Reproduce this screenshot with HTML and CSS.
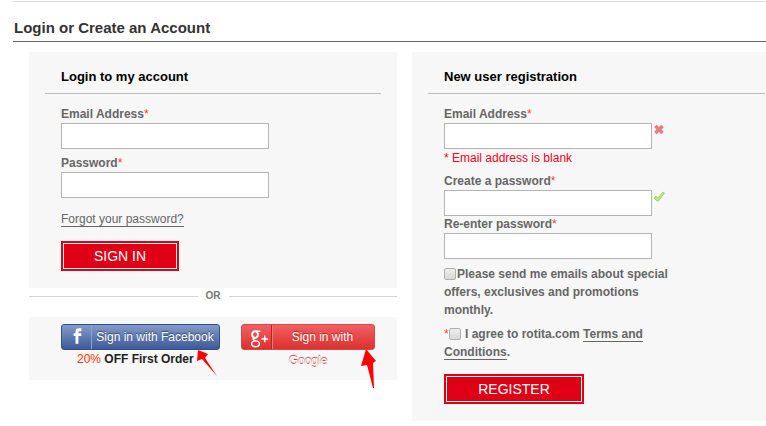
FILE: index.html
```html
<!DOCTYPE html>
<html lang="en">
<head>
  <meta charset="UTF-8" />
  <meta name="viewport" content="width=device-width, initial-scale=1.0" />
  <title>Login or Create an Account</title>
  <link rel="stylesheet" href="styles.css">
</head>
<body>
  <main class="page">
    <h1>Login or Create an Account</h1>

    <div class="columns">
      <div class="login-column">
        <form class="panel">
          <h2>Login to my account</h2>
          <div class="panel-body">
            <div class="field">
              <label for="loginEmail">Email Address<span class="required">*</span></label>
              <input type="email" id="loginEmail">
            </div>
            <div class="field">
              <label for="loginPassword">Password<span class="required">*</span></label>
              <input type="password" id="loginPassword">
            </div>
            <p class="forgot"><a href="#">Forgot your password?</a></p>
            <button type="submit" class="btn">SIGN IN</button>
          </div>
        </form>

        <div class="or">OR</div>

        <div class="social">
          <div class="social-item">
            <a href="#" class="social-btn facebook">
              <svg class="social-icon" viewBox="0 0 30 24">
                <path d="M14 19v-8h-2V8h2V7c0-3 1-4 4-4h2v3h-1c-1 0-2 0-2 1v1h3v3h-3v8z" fill="#fff" />
              </svg>
              <span class="social-text">Sign in with Facebook</span>
            </a>
            <svg class="arrow arrow-facebook" viewBox="0 0 20 40">
              <path d="M1 0l10 4-3 4 12 18L5 9 0 11z" fill="#f00" />
            </svg>
            <p class="offer"><span>20%</span> OFF First Order</p>
          </div>
          <div class="social-item">
            <a href="#" class="social-btn google">
              <svg class="social-icon" viewBox="0 0 30 24">
                <g fill="none" stroke="#fff">
                  <ellipse cx="13.500" cy="9.500" rx="3" ry="3.500" stroke-width="2" />
                  <path d="M14 6h5M13 13c-3 1-1 2 1 3" stroke-width="1.500" />
                  <ellipse cx="14" cy="19" rx="4" ry="3" stroke-width="1.500" />
                  <path d="M20 14h7M23.500 10.500v7" stroke-width="1.500" />
                </g>
              </svg>
              <span class="social-text">Sign in with Google</span>
            </a>
            <svg class="arrow arrow-google" viewBox="0 0 20 40">
              <path d="M5 0l10 12-3 2 1 25h-1L6 16l-6 1z" fill="#f00" />
            </svg>
          </div>
        </div>
      </div>

      <form class="panel">
        <h2>New user registration</h2>
        <div class="panel-body">
          <div class="field">
            <label for="newEmail">Email Address<span class="required">*</span></label>
            <div class="input-row">
              <input type="email" id="newEmail" aria-describedby="emailError">
              <svg class="status" viewBox="0 0 12 12">
                <path d="M2.500 3l7 7M9.500 3l-7 7" stroke="#c98080" stroke-width="3.500" />
                <path d="M2.500 3l7 7M9.500 3l-7 7" stroke="#ee7c7c" stroke-width="2" />
              </svg>
            </div>
            <p class="error" id="emailError">* Email address is blank</p>
          </div>
          <div class="field">
            <label for="newPassword">Create a password<span class="required">*</span></label>
            <div class="input-row">
              <input type="password" id="newPassword">
              <svg class="status" viewBox="0 0 12 12">
                <path d="M1 8l2-2 2 2 5-6 1.500 1-6 8H4z" fill="#b4ed6c" stroke="#a9cf84" stroke-width="1" />
              </svg>
            </div>
          </div>
          <div class="field field-tight">
            <label for="repeatPassword">Re-enter password<span class="required">*</span></label>
            <input type="password" id="repeatPassword">
          </div>
          <p class="check">
            <input type="checkbox" id="news"><label for="news">Please send me emails about special offers, exclusives and promotions monthly.</label>
          </p>
          <p class="check">
            <span class="required">*</span><input type="checkbox" id="agree">
            <label for="agree">I agree to rotita.com</label> <a href="#">Terms and Conditions</a>.
          </p>
          <button type="submit" class="btn btn-register">REGISTER</button>
        </div>
      </form>
    </div>
  </main>
</body>
</html>
```
FILE: styles.css
```css
* {
  box-sizing: border-box;
  margin: 0;
  padding: 0;
}

body {
  background: #fff;
  color: #666;
  font-family: "Liberation Sans", Arial, sans-serif;
  font-size: 12px;
  line-height: 18px;
  padding-top: 1px;
}

a {
  color: #666;
  text-decoration: none;
  border-bottom: 1px solid #666;
}

.page {
  margin-left: 13px;
  border-top: 1px solid #ddd;
}

h1 {
  color: #333;
  font-size: 15px;
  line-height: 20px;
  padding: 16px 0 3px 1px;
  border-bottom: 1px solid #666;
}

.columns {
  display: grid;
  grid-template-columns: 368fr 354fr;
  gap: 15px;
  align-items: start;
  padding: 10px 0 5px 16px;
}

.panel {
  background: #f7f7f7;
  padding: 0 1px 17px 16px;
}

.login-column .panel {
  padding-right: 16px;
}

h2 {
  color: #000;
  font-size: 13px;
  line-height: 18px;
  padding: 16px 16px 7px;
  border-bottom: 1px solid #bbb;
}

.panel-body {
  padding: 11px 0 0 16px;
}

.field {
  margin-bottom: 5px;
}

.field label {
  display: block;
  font-weight: bold;
}

.field input {
  display: block;
  width: 208px;
  height: 26px;
  padding: 0 4px;
  background: #fff;
  border: 1px solid #b4b4b4;
}

.field-tight {
  margin: -6px 0 6px;
}

.required {
  color: #e43;
  font-weight: normal;
}

.input-row {
  display: flex;
  gap: 1px;
}

.status {
  width: 12px;
  height: 12px;
  fill: none;
}

.error {
  color: #f00020;
}

.forgot {
  padding: 7px 0 13px;
}

.btn {
  display: block;
  width: 118px;
  height: 30px;
  color: #fff;
  background: #e00016;
  border: 2px solid #e00016;
  box-shadow: inset 0 0 0 1px #fff;
  font-family: inherit;
  font-size: 14px;
  cursor: pointer;
}

.btn-register {
  width: 140px;
  margin-top: 13px;
}

.or {
  display: flex;
  align-items: center;
  gap: 8px;
  height: 16px;
  margin-bottom: 13px;
  color: #777;
  font-size: 10px;
  font-weight: bold;
}

.or::before,
.or::after {
  content: "";
  flex: 1;
  height: 1px;
  background: #d4d4d4;
}

.social {
  display: flex;
  gap: 21px;
  height: 63px;
  padding: 7px 0 0 32px;
  background: #f7f7f7;
}

.social-item {
  position: relative;
}

/* icon and text share one cell, the indent clears the icon */
.social-btn {
  display: grid;
  height: 26px;
  color: #fff;
  line-height: 24px;
  border: 1px solid;
  border-radius: 3px;
}

.social-icon,
.social-text {
  grid-area: 1 / 1;
}

.social-icon {
  width: 30px;
  height: 24px;
}

.social-text {
  text-align: center;
  text-indent: 29px;
}

.facebook {
  width: 159px;
  background: linear-gradient(#849bca, #3c5a98);
  border-color: #34508c;
  text-shadow: 0 -1px 1px #345;
}

.facebook .social-icon {
  border-right: 1px solid #8ca4d3;
}

.google {
  width: 134px;
  background: linear-gradient(#f06161, #dc3030);
  border-color: #d84848;
  text-shadow: 0 -1px 1px #a22;
}

.google .social-icon {
  border-right: 1px solid #c81c1c;
  box-shadow: 1px 0 #f07878;
}

.google .social-text {
  padding: 0 8px;
}

.offer {
  color: #222;
  font-weight: bold;
  padding-left: 16px;
}

.offer span {
  color: #f30;
  font-weight: normal;
}

.arrow {
  position: absolute;
  width: 20px;
  height: 40px;
}

.arrow-facebook {
  top: 26px;
  left: 136px;
}

.arrow-google {
  top: 25px;
  left: 120px;
}

.check {
  max-width: 232px;
  margin-bottom: 6px;
  font-weight: bold;
}

.check input {
  appearance: none;
  width: 12px;
  height: 12px;
  margin-right: 1px;
  background: linear-gradient(#eee, #d8d8d8);
  border: 1px solid #b0b0b0;
  border-radius: 2px;
  vertical-align: -2px;
}

.check input:checked {
  background: #666;
}
```
